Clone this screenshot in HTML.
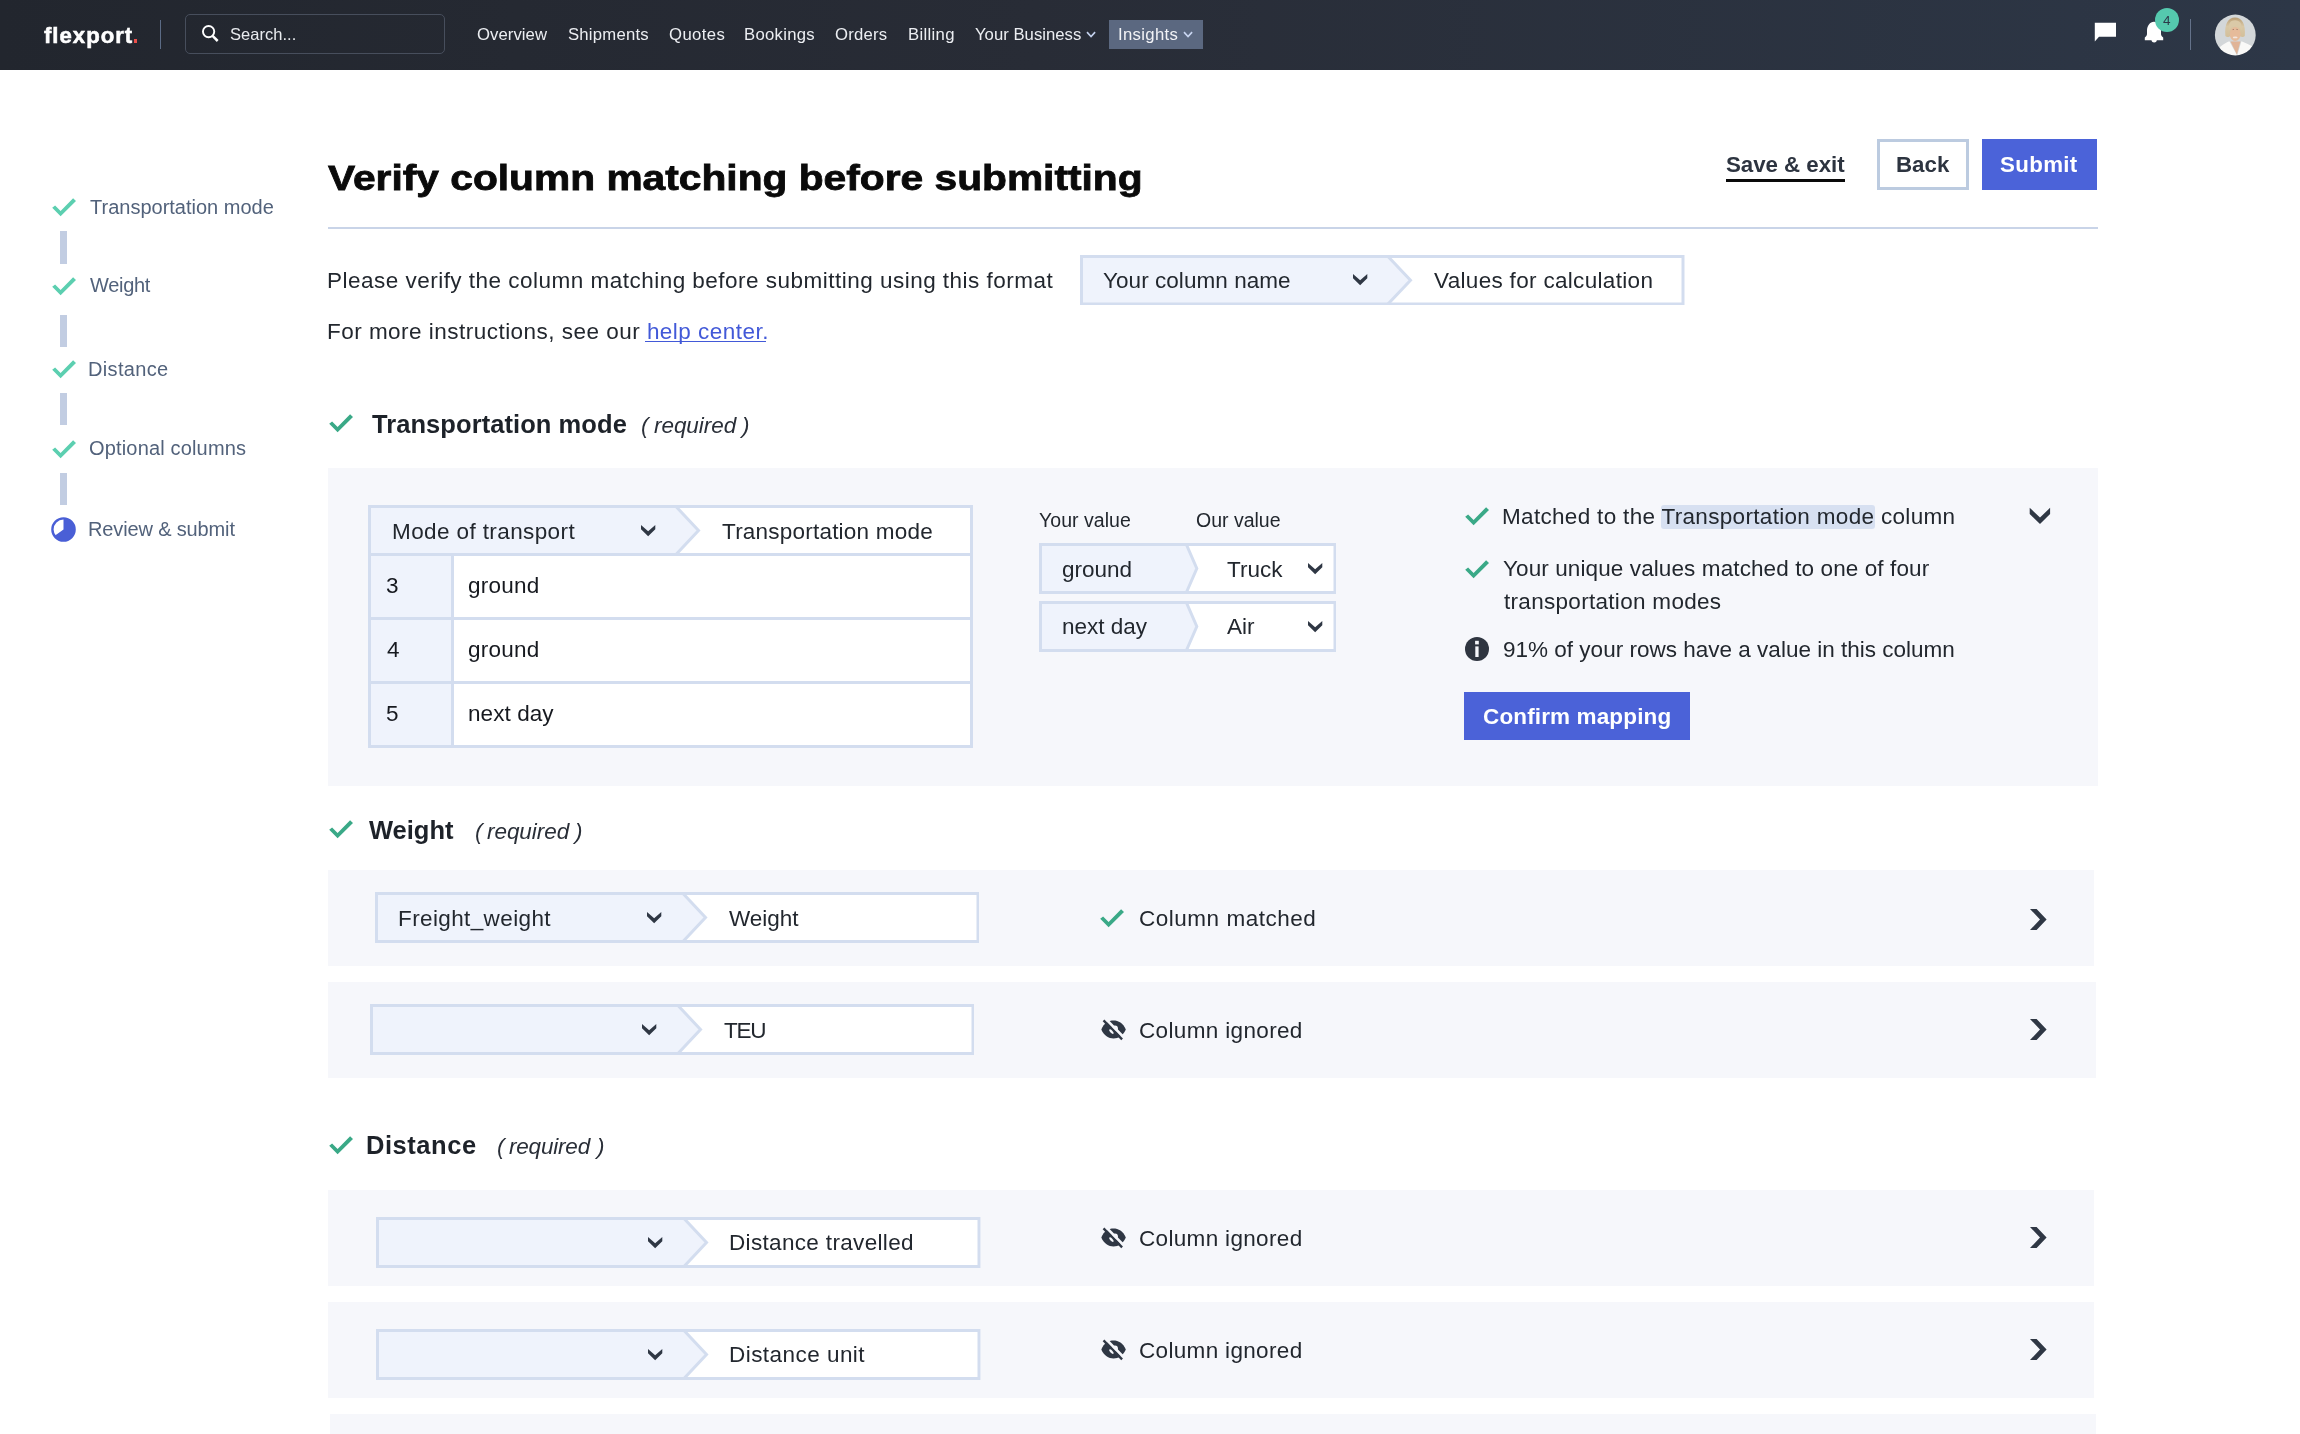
<!DOCTYPE html>
<html><head><meta charset="utf-8">
<style>
html,body{margin:0;padding:0;}
body{width:2300px;height:1434px;position:relative;overflow:hidden;background:#fff;font-family:"Liberation Sans",sans-serif;color:#1d2229;}
.a{position:absolute;}
.t{position:absolute;white-space:nowrap;will-change:transform;}
</style></head><body>
<div class="a" style="left:0px;top:0px;width:2300px;height:70px;background:linear-gradient(90deg,#22262e 0%,#282c36 45%,#2d3747 100%);"></div>
<div class="a" style="left:133.6px;top:39.2px;width:3.6px;height:3.6px;background:#ea4f4a;"></div>
<div class="a" style="left:160px;top:20px;width:1px;height:29px;background:#5b6b85;"></div>
<div class="a" style="left:184.5px;top:14.3px;width:260.5px;height:39.5px;box-sizing:border-box;border:1.5px solid #474e5c;border-radius:5px;"></div>
<svg class="a" style="left:200px;top:23px" width="22" height="22" viewBox="0 0 22 22"><circle cx="8.6" cy="8.6" r="5.65" fill="none" stroke="#fff" stroke-width="1.9"/><line x1="12.6" y1="12.8" x2="17.7" y2="18.0" stroke="#fff" stroke-width="2.5"/></svg>
<svg class="a" style="left:1086.4px;top:31px" width="11" height="8" viewBox="0 0 11 8"><polyline points="1,1.1 5.05,5.6 9.1,1.1" fill="none" stroke="#c3d0ec" stroke-width="1.6"/></svg>
<div class="a" style="left:1109px;top:20.3px;width:94px;height:28.5px;background:#5b6880;"></div>
<svg class="a" style="left:1182.6px;top:31px" width="11" height="8" viewBox="0 0 11 8"><polyline points="1,1.1 5.05,5.6 9.1,1.1" fill="none" stroke="#c8d5f0" stroke-width="1.6"/></svg>
<svg class="a" style="left:2094px;top:22px" width="24" height="22" viewBox="0 0 24 22"><polygon points="0.8,0.8 22,0.8 22,14.8 5,14.8 0.8,19.6" fill="#fff"/></svg>
<svg class="a" style="left:2143px;top:20px" width="24" height="24" viewBox="0 0 24 24"><path d="M10.9,1.7 C7,1.9 4,5.5 4,11 L4,14 C4,15.6 3,16.6 1.8,17.6 L1.8,20.2 L20.2,20.2 L20.2,17.6 C19,16.6 18,15.6 18,14 L18,11 C18,5.5 15,1.9 11.1,1.7 Z" fill="#fff"/><path d="M8.5,20 A2.65,2.5 0 0 0 13.8,20 Z" fill="#fff"/></svg>
<div class="a" style="left:2155px;top:7.8px;width:24px;height:24px;border-radius:50%;background:#55c9ae;"></div>
<div class="a" style="left:2190px;top:19px;width:1px;height:31px;background:#64728a;"></div>
<svg class="a" style="left:2214px;top:13.5px" width="42" height="42" viewBox="0 0 42 42">
<defs><clipPath id="av"><circle cx="21.3" cy="21" r="20.4"/></clipPath><filter id="avb"><feGaussianBlur stdDeviation="0.55"/></filter><linearGradient id="hg" x1="0" y1="0" x2="0" y2="1"><stop offset="0" stop-color="#b99d74"/><stop offset="0.45" stop-color="#d9c8a6"/><stop offset="1" stop-color="#d2bf9a"/></linearGradient></defs>
<g clip-path="url(#av)"><g filter="url(#avb)">
<rect width="42" height="42" fill="#d3d7d9"/>
<path d="M11.4,22 C10.4,10 14,3.6 21,3.6 C28,3.6 31.8,10 30.8,22 C29.6,23.5 28,23.2 27,22.5 L15.5,22.5 C14.2,23.2 12.6,23.5 11.4,22 Z" fill="url(#hg)"/>
<path d="M2,37 C7,31.5 12,28.5 15.4,27.3 L23.2,41.5 L27.4,27.3 C31,28.5 36,31 41,34 L42,42 L0,42 Z" fill="#f9f9f7"/>
<polygon points="16.5,27.5 26.4,27.5 22.9,40.5" fill="#e0b497"/>
<ellipse cx="21.2" cy="20" rx="5.4" ry="6.9" fill="#e6bb9a"/>
<path d="M14.8,17 C14,9 16.5,6.2 21,6.2 C26,6.2 28.4,9.5 27.8,16.5 C26.5,13.6 24.5,12.6 21.2,12.6 C18,12.6 16.2,14 14.8,17 Z" fill="#dac9a7"/>
<ellipse cx="21.2" cy="23.4" rx="2.4" ry="0.9" fill="#f2e6e0"/>
<path d="M18.6,15.6 L20,15.4 M22.4,15.4 L23.8,15.6" stroke="#8a6a58" stroke-width="0.7"/>
</g></g></svg>
<svg class="a" style="left:51.5px;top:198.4px" width="26" height="21" viewBox="0 0 26 21"><polygon points="0.20,9.80 3.10,7.50 8.60,12.90 21.10,0.20 24.00,3.00 8.60,18.20" fill="#5ccfb0"/></svg>
<svg class="a" style="left:51.5px;top:277px" width="26" height="21" viewBox="0 0 26 21"><polygon points="0.20,9.80 3.10,7.50 8.60,12.90 21.10,0.20 24.00,3.00 8.60,18.20" fill="#5ccfb0"/></svg>
<svg class="a" style="left:51.5px;top:359.9px" width="26" height="21" viewBox="0 0 26 21"><polygon points="0.20,9.80 3.10,7.50 8.60,12.90 21.10,0.20 24.00,3.00 8.60,18.20" fill="#5ccfb0"/></svg>
<svg class="a" style="left:51.5px;top:439.8px" width="26" height="21" viewBox="0 0 26 21"><polygon points="0.20,9.80 3.10,7.50 8.60,12.90 21.10,0.20 24.00,3.00 8.60,18.20" fill="#5ccfb0"/></svg>
<div class="a" style="left:60.1px;top:231.4px;width:6.9px;height:32.4px;background:#c2cde2;"></div>
<div class="a" style="left:60.1px;top:315px;width:6.9px;height:31.7px;background:#c2cde2;"></div>
<div class="a" style="left:60.1px;top:393.2px;width:6.9px;height:31.7px;background:#c2cde2;"></div>
<div class="a" style="left:60.1px;top:473px;width:6.9px;height:31.8px;background:#c2cde2;"></div>
<svg class="a" style="left:51px;top:516.5px" width="25" height="25" viewBox="0 0 25 25"><circle cx="12.5" cy="12.5" r="11.1" fill="#fff" stroke="#4a5fd6" stroke-width="2.4"/><path d="M12.5,12.5 L12.5,1.3 A11.2,11.2 0 1 1 3.4,19 Z" fill="#4a5fd6"/></svg>
<div class="a" style="left:1726px;top:178.8px;width:119px;height:3px;background:#0a0a0a;"></div>
<div class="a" style="left:1876.6px;top:139px;width:92.3px;height:50.7px;box-sizing:border-box;border:3px solid #bccbe0;background:#fff;"></div>
<div class="a" style="left:1982px;top:139px;width:115px;height:50.7px;background:#4b63d9;"></div>
<div class="a" style="left:327.5px;top:226.5px;width:1770px;height:2px;background:#c9d4e8;"></div>
<svg class="a" style="left:1080px;top:254.5px" width="604.5" height="50.5" viewBox="0 0 604.5 50.5"><rect x="0" y="0" width="604.5" height="50.5" fill="#fff"/><polygon points="0,0 306.6,0 330.5,25.25 306.6,50.5 0,50.5" fill="#eff3fc"/><polyline points="306.6,0 330.5,25.25 306.6,50.5" fill="none" stroke="#d3ddef" stroke-width="3" stroke-linejoin="miter" stroke-miterlimit="10"/><rect x="1.5" y="1.5" width="601.5" height="47.5" fill="none" stroke="#d3ddef" stroke-width="3"/></svg>
<div class="a" style="left:645px;top:340.8px;width:121px;height:1.4px;background:#4259d8;"></div>
<svg class="a" style="left:1352.6px;top:274.3px" width="15.3" height="12.3" viewBox="0 0 15.3 12.3"><polygon points="0,0 7.15,6.2 14.3,0 14.3,4.2 7.15,11.3 0,4.2" fill="#2f3744"/></svg>
<svg class="a" style="left:328.6px;top:414px" width="26" height="21" viewBox="0 0 26 21"><polygon points="0.20,9.80 3.10,7.50 8.60,12.90 21.10,0.20 24.00,3.00 8.60,18.20" fill="#3aa987"/></svg>
<div class="a" style="left:328px;top:468px;width:1770px;height:318px;background:#f6f7fb;"></div>
<div class="a" style="left:368px;top:505px;width:605px;height:243px;background:#d3ddef;"></div>
<svg class="a" style="left:368px;top:505px" width="605" height="51" viewBox="0 0 605 51"><rect x="0" y="0" width="605" height="51" fill="#fff"/><polygon points="0,0 306.6,0 330.5,25.5 306.6,51 0,51" fill="#eff3fc"/><polyline points="306.6,0 330.5,25.5 306.6,51" fill="none" stroke="#d3ddef" stroke-width="3" stroke-linejoin="miter" stroke-miterlimit="10"/><rect x="1.5" y="1.5" width="602" height="48" fill="none" stroke="#d3ddef" stroke-width="3"/></svg>
<div class="a" style="left:371px;top:556px;width:80px;height:61px;background:#eff3fc;"></div>
<div class="a" style="left:454px;top:556px;width:516px;height:61px;background:#fff;"></div>
<div class="a" style="left:371px;top:620px;width:80px;height:61px;background:#eff3fc;"></div>
<div class="a" style="left:454px;top:620px;width:516px;height:61px;background:#fff;"></div>
<div class="a" style="left:371px;top:684px;width:80px;height:61px;background:#eff3fc;"></div>
<div class="a" style="left:454px;top:684px;width:516px;height:61px;background:#fff;"></div>
<svg class="a" style="left:641px;top:524.7px" width="15.3" height="12.3" viewBox="0 0 15.3 12.3"><polygon points="0,0 7.15,6.2 14.3,0 14.3,4.2 7.15,11.3 0,4.2" fill="#2f3744"/></svg>
<svg class="a" style="left:1038.5px;top:543.3px" width="297.5" height="51" viewBox="0 0 297.5 51"><rect x="0" y="0" width="297.5" height="51" fill="#fff"/><polygon points="0,0 146.7,0 157.8,25.5 146.7,51 0,51" fill="#eff3fc"/><polyline points="146.7,0 157.8,25.5 146.7,51" fill="none" stroke="#d3ddef" stroke-width="3" stroke-linejoin="miter" stroke-miterlimit="10"/><rect x="1.5" y="1.5" width="294.5" height="48" fill="none" stroke="#d3ddef" stroke-width="3"/></svg>
<svg class="a" style="left:1307.9px;top:563.0px" width="15.3" height="12.3" viewBox="0 0 15.3 12.3"><polygon points="0,0 7.15,6.2 14.3,0 14.3,4.2 7.15,11.3 0,4.2" fill="#2f3744"/></svg>
<svg class="a" style="left:1038.5px;top:601.3px" width="297.5" height="51" viewBox="0 0 297.5 51"><rect x="0" y="0" width="297.5" height="51" fill="#fff"/><polygon points="0,0 146.7,0 157.8,25.5 146.7,51 0,51" fill="#eff3fc"/><polyline points="146.7,0 157.8,25.5 146.7,51" fill="none" stroke="#d3ddef" stroke-width="3" stroke-linejoin="miter" stroke-miterlimit="10"/><rect x="1.5" y="1.5" width="294.5" height="48" fill="none" stroke="#d3ddef" stroke-width="3"/></svg>
<svg class="a" style="left:1307.9px;top:621.0px" width="15.3" height="12.3" viewBox="0 0 15.3 12.3"><polygon points="0,0 7.15,6.2 14.3,0 14.3,4.2 7.15,11.3 0,4.2" fill="#2f3744"/></svg>
<svg class="a" style="left:1465px;top:506.8px" width="26" height="21" viewBox="0 0 26 21"><polygon points="0.20,9.80 3.10,7.50 8.60,12.90 21.10,0.20 24.00,3.00 8.60,18.20" fill="#3aa987"/></svg>
<div class="a" style="left:1661px;top:505px;width:213.6px;height:23.5px;background:#d7e0f1;border-radius:3px;"></div>
<svg class="a" style="left:2029px;top:507px" width="23" height="18" viewBox="0 0 23 18"><polygon points="0.7,0.8 11,10.4 21.1,0.8 21.1,7.1 11,17 0.7,7.1" fill="#2f3744"/></svg>
<svg class="a" style="left:1465px;top:559.7px" width="26" height="21" viewBox="0 0 26 21"><polygon points="0.20,9.80 3.10,7.50 8.60,12.90 21.10,0.20 24.00,3.00 8.60,18.20" fill="#3aa987"/></svg>
<svg class="a" style="left:1465px;top:636.8px" width="24" height="24" viewBox="0 0 24 24"><circle cx="12" cy="12" r="12" fill="#2f3540"/><rect x="10.1" y="3.8" width="3.7" height="3.6" fill="#f6f7fb"/><rect x="10.3" y="9.4" width="3.3" height="10.6" fill="#f6f7fb"/></svg>
<div class="a" style="left:1464px;top:692px;width:226px;height:48px;background:#4b62d8;"></div>
<svg class="a" style="left:328.6px;top:820.4px" width="26" height="21" viewBox="0 0 26 21"><polygon points="0.20,9.80 3.10,7.50 8.60,12.90 21.10,0.20 24.00,3.00 8.60,18.20" fill="#3aa987"/></svg>
<div class="a" style="left:328px;top:869.6px;width:1766.3000000000002px;height:96.0px;background:#f6f7fb;"></div>
<svg class="a" style="left:374.5px;top:892px" width="604.5" height="51" viewBox="0 0 604.5 51"><rect x="0" y="0" width="604.5" height="51" fill="#fff"/><polygon points="0,0 306.6,0 330.5,25.5 306.6,51 0,51" fill="#eff3fc"/><polyline points="306.6,0 330.5,25.5 306.6,51" fill="none" stroke="#d3ddef" stroke-width="3" stroke-linejoin="miter" stroke-miterlimit="10"/><rect x="1.5" y="1.5" width="601.5" height="48" fill="none" stroke="#d3ddef" stroke-width="3"/></svg>
<svg class="a" style="left:646.9px;top:912.2px" width="15.3" height="12.3" viewBox="0 0 15.3 12.3"><polygon points="0,0 7.15,6.2 14.3,0 14.3,4.2 7.15,11.3 0,4.2" fill="#2f3744"/></svg>
<svg class="a" style="left:1100px;top:908.5px" width="26" height="21" viewBox="0 0 26 21"><polygon points="0.20,9.80 3.10,7.50 8.60,12.90 21.10,0.20 24.00,3.00 8.60,18.20" fill="#3aa987"/></svg>
<svg class="a" style="left:2030px;top:908.6px" width="18" height="22" viewBox="0 0 18 22"><polygon points="0,0 6.6,0 16.6,10.5 6.6,21 0,21 10,10.5" fill="#2f3744"/></svg>
<div class="a" style="left:328px;top:981.5px;width:1768px;height:96.29999999999995px;background:#f6f7fb;"></div>
<svg class="a" style="left:369.5px;top:1004px" width="604.5" height="51" viewBox="0 0 604.5 51"><rect x="0" y="0" width="604.5" height="51" fill="#fff"/><polygon points="0,0 306.6,0 330.5,25.5 306.6,51 0,51" fill="#eff3fc"/><polyline points="306.6,0 330.5,25.5 306.6,51" fill="none" stroke="#d3ddef" stroke-width="3" stroke-linejoin="miter" stroke-miterlimit="10"/><rect x="1.5" y="1.5" width="601.5" height="48" fill="none" stroke="#d3ddef" stroke-width="3"/></svg>
<svg class="a" style="left:641.9px;top:1024.2px" width="15.3" height="12.3" viewBox="0 0 15.3 12.3"><polygon points="0,0 7.15,6.2 14.3,0 14.3,4.2 7.15,11.3 0,4.2" fill="#2f3744"/></svg>
<svg class="a" style="left:1100px;top:1018.9999999999999px" width="28" height="23" viewBox="0 0 28 23"><defs><clipPath id="es1"><polygon points="-2.4,-6.3 29.6,27.5 40,27.5 40,-10 -2.4,-10"/></clipPath></defs><path d="M1.3,10.5 C4,4.2 8.6,1.6 13.5,1.6 C18.4,1.6 23,4.2 25.8,10.5 C23,16.8 18.4,19.4 13.5,19.4 C8.6,19.4 4,16.8 1.3,10.5 Z" fill="#2f3744"/><g clip-path="url(#es1)"><circle cx="15.0" cy="9.5" r="2.95" fill="#f6f7fb"/><line x1="0" y1="-5.8" x2="29.2" y2="24.0" stroke="#f6f7fb" stroke-width="2.8"/></g><line x1="3.5" y1="1.35" x2="22.1" y2="20.4" stroke="#2f3744" stroke-width="2.3"/><ellipse cx="11.4" cy="12.6" rx="2.9" ry="1.2" transform="rotate(45 11.4 12.6)" fill="#f6f7fb"/></svg>
<svg class="a" style="left:2030px;top:1018.9px" width="18" height="22" viewBox="0 0 18 22"><polygon points="0,0 6.6,0 16.6,10.5 6.6,21 0,21 10,10.5" fill="#2f3744"/></svg>
<svg class="a" style="left:328.6px;top:1135.5px" width="26" height="21" viewBox="0 0 26 21"><polygon points="0.20,9.80 3.10,7.50 8.60,12.90 21.10,0.20 24.00,3.00 8.60,18.20" fill="#3aa987"/></svg>
<div class="a" style="left:328px;top:1189.5px;width:1766.3000000000002px;height:96.29999999999995px;background:#f6f7fb;"></div>
<svg class="a" style="left:376px;top:1216.5px" width="604.5" height="51" viewBox="0 0 604.5 51"><rect x="0" y="0" width="604.5" height="51" fill="#fff"/><polygon points="0,0 306.6,0 330.5,25.5 306.6,51 0,51" fill="#eff3fc"/><polyline points="306.6,0 330.5,25.5 306.6,51" fill="none" stroke="#d3ddef" stroke-width="3" stroke-linejoin="miter" stroke-miterlimit="10"/><rect x="1.5" y="1.5" width="601.5" height="48" fill="none" stroke="#d3ddef" stroke-width="3"/></svg>
<svg class="a" style="left:648.4px;top:1236.7px" width="15.3" height="12.3" viewBox="0 0 15.3 12.3"><polygon points="0,0 7.15,6.2 14.3,0 14.3,4.2 7.15,11.3 0,4.2" fill="#2f3744"/></svg>
<svg class="a" style="left:1100px;top:1226.9px" width="28" height="23" viewBox="0 0 28 23"><defs><clipPath id="es2"><polygon points="-2.4,-6.3 29.6,27.5 40,27.5 40,-10 -2.4,-10"/></clipPath></defs><path d="M1.3,10.5 C4,4.2 8.6,1.6 13.5,1.6 C18.4,1.6 23,4.2 25.8,10.5 C23,16.8 18.4,19.4 13.5,19.4 C8.6,19.4 4,16.8 1.3,10.5 Z" fill="#2f3744"/><g clip-path="url(#es2)"><circle cx="15.0" cy="9.5" r="2.95" fill="#f6f7fb"/><line x1="0" y1="-5.8" x2="29.2" y2="24.0" stroke="#f6f7fb" stroke-width="2.8"/></g><line x1="3.5" y1="1.35" x2="22.1" y2="20.4" stroke="#2f3744" stroke-width="2.3"/><ellipse cx="11.4" cy="12.6" rx="2.9" ry="1.2" transform="rotate(45 11.4 12.6)" fill="#f6f7fb"/></svg>
<svg class="a" style="left:2030px;top:1226.9px" width="18" height="22" viewBox="0 0 18 22"><polygon points="0,0 6.6,0 16.6,10.5 6.6,21 0,21 10,10.5" fill="#2f3744"/></svg>
<div class="a" style="left:328px;top:1301.5px;width:1766.3000000000002px;height:96.5px;background:#f6f7fb;"></div>
<svg class="a" style="left:376px;top:1328.8px" width="604.5" height="51" viewBox="0 0 604.5 51"><rect x="0" y="0" width="604.5" height="51" fill="#fff"/><polygon points="0,0 306.6,0 330.5,25.5 306.6,51 0,51" fill="#eff3fc"/><polyline points="306.6,0 330.5,25.5 306.6,51" fill="none" stroke="#d3ddef" stroke-width="3" stroke-linejoin="miter" stroke-miterlimit="10"/><rect x="1.5" y="1.5" width="601.5" height="48" fill="none" stroke="#d3ddef" stroke-width="3"/></svg>
<svg class="a" style="left:648.4px;top:1349.0px" width="15.3" height="12.3" viewBox="0 0 15.3 12.3"><polygon points="0,0 7.15,6.2 14.3,0 14.3,4.2 7.15,11.3 0,4.2" fill="#2f3744"/></svg>
<svg class="a" style="left:1100px;top:1339.0px" width="28" height="23" viewBox="0 0 28 23"><defs><clipPath id="es3"><polygon points="-2.4,-6.3 29.6,27.5 40,27.5 40,-10 -2.4,-10"/></clipPath></defs><path d="M1.3,10.5 C4,4.2 8.6,1.6 13.5,1.6 C18.4,1.6 23,4.2 25.8,10.5 C23,16.8 18.4,19.4 13.5,19.4 C8.6,19.4 4,16.8 1.3,10.5 Z" fill="#2f3744"/><g clip-path="url(#es3)"><circle cx="15.0" cy="9.5" r="2.95" fill="#f6f7fb"/><line x1="0" y1="-5.8" x2="29.2" y2="24.0" stroke="#f6f7fb" stroke-width="2.8"/></g><line x1="3.5" y1="1.35" x2="22.1" y2="20.4" stroke="#2f3744" stroke-width="2.3"/><ellipse cx="11.4" cy="12.6" rx="2.9" ry="1.2" transform="rotate(45 11.4 12.6)" fill="#f6f7fb"/></svg>
<svg class="a" style="left:2030px;top:1338.9px" width="18" height="22" viewBox="0 0 18 22"><polygon points="0,0 6.6,0 16.6,10.5 6.6,21 0,21 10,10.5" fill="#2f3744"/></svg>
<div class="a" style="left:329.5px;top:1413.6px;width:1766.5px;height:30px;background:#f6f7fb;"></div>
<div class="t" style="left:43.50px;top:25.00px;font-size:22.2px;line-height:22.2px;letter-spacing:0.986px;font-weight:bold;-webkit-text-stroke:0.55px #fff;color:#fff;">flexport</div>
<div class="t" style="left:229.70px;top:26.00px;font-size:16.5px;line-height:16.5px;letter-spacing:0.037px;color:#e9ebef;">Search...</div>
<div class="t" style="left:476.80px;top:27.00px;font-size:16.7px;line-height:16.7px;letter-spacing:0.057px;color:#eceef2;">Overview</div>
<div class="t" style="left:568.40px;top:27.00px;font-size:16.7px;line-height:16.7px;letter-spacing:0.225px;color:#eceef2;">Shipments</div>
<div class="t" style="left:668.50px;top:27.00px;font-size:16.7px;line-height:16.7px;letter-spacing:0.4px;color:#eceef2;">Quotes</div>
<div class="t" style="left:744.00px;top:27.00px;font-size:16.7px;line-height:16.7px;letter-spacing:0.286px;color:#eceef2;">Bookings</div>
<div class="t" style="left:835.00px;top:27.00px;font-size:16.7px;line-height:16.7px;letter-spacing:0.2px;color:#eceef2;">Orders</div>
<div class="t" style="left:907.70px;top:27.00px;font-size:16.7px;line-height:16.7px;letter-spacing:0.317px;color:#eceef2;">Billing</div>
<div class="t" style="left:974.80px;top:27.00px;font-size:16.7px;line-height:16.7px;letter-spacing:0.017px;color:#eceef2;">Your Business</div>
<div class="t" style="left:1117.70px;top:27.00px;font-size:16.7px;line-height:16.7px;letter-spacing:0.329px;color:#f2f3f6;">Insights</div>
<div class="t" style="left:2163.00px;top:14.00px;font-size:13.5px;line-height:13.5px;letter-spacing:0px;color:#2d3a4a;">4</div>
<div class="t" style="left:89.50px;top:197.00px;font-size:20px;line-height:20px;letter-spacing:0.0px;color:#52627b;">Transportation mode</div>
<div class="t" style="left:89.50px;top:275.00px;font-size:20px;line-height:20px;letter-spacing:-0.3px;color:#52627b;">Weight</div>
<div class="t" style="left:87.50px;top:359.00px;font-size:20px;line-height:20px;letter-spacing:0.343px;color:#52627b;">Distance</div>
<div class="t" style="left:88.50px;top:438.00px;font-size:20px;line-height:20px;letter-spacing:0.167px;color:#52627b;">Optional columns</div>
<div class="t" style="left:87.50px;top:519.00px;font-size:20px;line-height:20px;letter-spacing:-0.143px;color:#52627b;">Review &amp; submit</div>
<div class="t" style="left:327.80px;top:161.00px;font-size:35.5px;line-height:35.5px;letter-spacing:0px;font-weight:bold;-webkit-text-stroke:0.8px #0a0a0a;color:#0a0a0a;transform:scaleX(1.1472);transform-origin:0 0;">Verify column matching before submitting</div>
<div class="t" style="left:1725.50px;top:154.00px;font-size:22.3px;line-height:22.3px;letter-spacing:-0.03px;font-weight:bold;color:#2d3440;">Save &amp; exit</div>
<div class="t" style="left:1896.00px;top:154.00px;font-size:22.3px;line-height:22.3px;letter-spacing:0.0px;font-weight:bold;color:#2d3440;">Back</div>
<div class="t" style="left:2000.20px;top:154.00px;font-size:22.3px;line-height:22.3px;letter-spacing:0.34px;font-weight:bold;color:#fff;">Submit</div>
<div class="t" style="left:327.10px;top:270.00px;font-size:22.5px;line-height:22.5px;letter-spacing:0.484px;color:#22272e;">Please verify the column matching before submitting using this format</div>
<div class="t" style="left:1103.20px;top:270.00px;font-size:22.5px;line-height:22.5px;letter-spacing:0.053px;color:#22272e;">Your column name</div>
<div class="t" style="left:1433.60px;top:270.00px;font-size:22.5px;line-height:22.5px;letter-spacing:0.319px;color:#22272e;">Values for calculation</div>
<div class="t" style="left:327.00px;top:321.00px;font-size:22.5px;line-height:22.5px;letter-spacing:0.476px;color:#22272e;">For more instructions, see our <span style="color:#4259d8;">help center.</span></div>
<div class="t" style="left:371.80px;top:412.00px;font-size:25.5px;line-height:25.5px;letter-spacing:0.067px;font-weight:bold;color:#1d2229;">Transportation mode</div>
<div class="t" style="left:641.00px;top:415.00px;font-size:22.5px;line-height:22.5px;letter-spacing:0px;font-style:italic;color:#2a2f38;">(</div>
<div class="t" style="left:653.90px;top:415.00px;font-size:22.5px;line-height:22.5px;letter-spacing:-0.057px;font-style:italic;color:#2a2f38;">required</div>
<div class="t" style="left:741.80px;top:415.00px;font-size:22.5px;line-height:22.5px;letter-spacing:0px;font-style:italic;color:#2a2f38;">)</div>
<div class="t" style="left:385.90px;top:575.00px;font-size:22.5px;line-height:22.5px;letter-spacing:0px;color:#16191f;">3</div>
<div class="t" style="left:468.40px;top:575.00px;font-size:22.5px;line-height:22.5px;letter-spacing:0.22px;color:#16191f;">ground</div>
<div class="t" style="left:386.90px;top:639.00px;font-size:22.5px;line-height:22.5px;letter-spacing:0px;color:#16191f;">4</div>
<div class="t" style="left:468.40px;top:639.00px;font-size:22.5px;line-height:22.5px;letter-spacing:0.22px;color:#16191f;">ground</div>
<div class="t" style="left:385.90px;top:703.00px;font-size:22.5px;line-height:22.5px;letter-spacing:0px;color:#16191f;">5</div>
<div class="t" style="left:468.40px;top:703.00px;font-size:22.5px;line-height:22.5px;letter-spacing:0.071px;color:#16191f;">next day</div>
<div class="t" style="left:391.70px;top:521.00px;font-size:22.5px;line-height:22.5px;letter-spacing:0.394px;color:#22272e;">Mode of transport</div>
<div class="t" style="left:721.70px;top:521.00px;font-size:22.5px;line-height:22.5px;letter-spacing:0.217px;color:#22272e;">Transportation mode</div>
<div class="t" style="left:1039.10px;top:511.00px;font-size:19.5px;line-height:19.5px;letter-spacing:0.044px;color:#22272e;">Your value</div>
<div class="t" style="left:1196.00px;top:511.00px;font-size:19.5px;line-height:19.5px;letter-spacing:0px;color:#22272e;">Our value</div>
<div class="t" style="left:1062.30px;top:559.00px;font-size:22.5px;line-height:22.5px;letter-spacing:0px;color:#22272e;">ground</div>
<div class="t" style="left:1227.10px;top:559.00px;font-size:22.5px;line-height:22.5px;letter-spacing:0px;color:#22272e;">Truck</div>
<div class="t" style="left:1062.30px;top:616.00px;font-size:22.5px;line-height:22.5px;letter-spacing:0px;color:#22272e;">next day</div>
<div class="t" style="left:1227.10px;top:616.00px;font-size:22.5px;line-height:22.5px;letter-spacing:0px;color:#22272e;">Air</div>
<div class="t" style="left:1501.80px;top:506.00px;font-size:22.5px;line-height:22.5px;letter-spacing:0.32px;color:#22272e;">Matched to the Transportation mode column</div>
<div class="t" style="left:1502.60px;top:558.00px;font-size:22.5px;line-height:22.5px;letter-spacing:0.105px;color:#22272e;">Your unique values matched to one of four</div>
<div class="t" style="left:1503.60px;top:591.00px;font-size:22.5px;line-height:22.5px;letter-spacing:0.3px;color:#22272e;">transportation modes</div>
<div class="t" style="left:1502.60px;top:639.00px;font-size:22.5px;line-height:22.5px;letter-spacing:0.009px;color:#22272e;">91% of your rows have a value in this column</div>
<div class="t" style="left:1482.80px;top:706.00px;font-size:22.5px;line-height:22.5px;letter-spacing:0.136px;font-weight:bold;color:#fff;">Confirm mapping</div>
<div class="t" style="left:368.90px;top:818.00px;font-size:25.5px;line-height:25.5px;letter-spacing:0.0px;font-weight:bold;color:#1d2229;">Weight</div>
<div class="t" style="left:475.40px;top:821.00px;font-size:22.5px;line-height:22.5px;letter-spacing:0px;font-style:italic;color:#2a2f38;">(</div>
<div class="t" style="left:487.10px;top:821.00px;font-size:22.5px;line-height:22.5px;letter-spacing:-0.057px;font-style:italic;color:#2a2f38;">required</div>
<div class="t" style="left:575.20px;top:821.00px;font-size:22.5px;line-height:22.5px;letter-spacing:0px;font-style:italic;color:#2a2f38;">)</div>
<div class="t" style="left:398.10px;top:908.00px;font-size:22.5px;line-height:22.5px;letter-spacing:0.385px;color:#22272e;">Freight_weight</div>
<div class="t" style="left:729.10px;top:908.00px;font-size:22.5px;line-height:22.5px;letter-spacing:-0.02px;color:#22272e;">Weight</div>
<div class="t" style="left:1138.50px;top:908.00px;font-size:22.5px;line-height:22.5px;letter-spacing:0.515px;color:#22272e;">Column matched</div>
<div class="t" style="left:724.10px;top:1020.00px;font-size:22.5px;line-height:22.5px;letter-spacing:-1.3px;color:#22272e;">TEU</div>
<div class="t" style="left:1138.50px;top:1020.00px;font-size:22.5px;line-height:22.5px;letter-spacing:0.346px;color:#22272e;">Column ignored</div>
<div class="t" style="left:365.90px;top:1133.00px;font-size:25.5px;line-height:25.5px;letter-spacing:0.543px;font-weight:bold;color:#1d2229;">Distance</div>
<div class="t" style="left:496.70px;top:1136.00px;font-size:22.5px;line-height:22.5px;letter-spacing:0px;font-style:italic;color:#2a2f38;">(</div>
<div class="t" style="left:509.00px;top:1136.00px;font-size:22.5px;line-height:22.5px;letter-spacing:-0.2px;font-style:italic;color:#2a2f38;">required</div>
<div class="t" style="left:596.50px;top:1136.00px;font-size:22.5px;line-height:22.5px;letter-spacing:0px;font-style:italic;color:#2a2f38;">)</div>
<div class="t" style="left:728.60px;top:1232.00px;font-size:22.5px;line-height:22.5px;letter-spacing:0.335px;color:#22272e;">Distance travelled</div>
<div class="t" style="left:1138.50px;top:1228.00px;font-size:22.5px;line-height:22.5px;letter-spacing:0.331px;color:#22272e;">Column ignored</div>
<div class="t" style="left:728.60px;top:1344.00px;font-size:22.5px;line-height:22.5px;letter-spacing:0.458px;color:#22272e;">Distance unit</div>
<div class="t" style="left:1138.50px;top:1340.00px;font-size:22.5px;line-height:22.5px;letter-spacing:0.331px;color:#22272e;">Column ignored</div>
</body></html>
